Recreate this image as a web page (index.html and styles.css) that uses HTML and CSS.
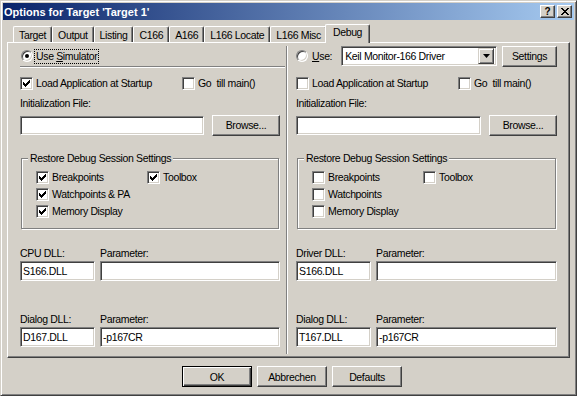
FILE: index.html
```html
<!DOCTYPE html>
<html>

<head>
	<meta charset="utf-8">
	<link rel="stylesheet" href="styles.css">
</head>

<body>

	<div class="window">
		<div class="titlebar">
			<span class="title">Options for Target 'Target 1'</span>
			<div class="caption-btns">
				<span class="cap-btn cap-help">?</span>
				<span class="cap-btn">
					<svg width="8" height="7" viewBox="0 0 8 7"><path d="M0 0h2v1H0zM6 0h2v1H6zM1 1h2v1H1zM5 1h2v1H5zM2 2h4v1H2zM3 3h2v1H3zM2 4h4v1H2zM1 5h2v1H1zM5 5h2v1H5zM0 6h2v1H0zM6 6h2v1H6z"/></svg>
				</span>
			</div>
		</div>

		<div class="client">
			<div class="tabs">
				<span class="tab">Target</span>
				<span class="tab">Output</span>
				<span class="tab">Listing</span>
				<span class="tab">C166</span>
				<span class="tab">A166</span>
				<span class="tab">L166 Locate</span>
				<span class="tab">L166 Misc</span>
				<span class="tab tab-active">Debug</span>
			</div>

			<div class="panel">
				<!-- Simulator side -->
				<div class="col col-left">
					<div class="top-row">
						<span class="radio radio-on"></span>
						<span class="focus">Use <u>S</u>imulator</span>
					</div>
					<div class="sep"></div>

					<div class="check-row">
						<label class="check"><span class="box"><svg width="7" height="7" viewBox="0 0 7 7"><path d="M0 2h1v3H0zM1 3h1v3H1zM2 4h1v3H2zM3 3h1v3H3zM4 2h1v3H4zM5 1h1v3H5zM6 0h1v3H6z"/></svg></span>Load Application at Startup</label>
						<label class="check"><span class="box"></span>Go&nbsp; till main()</label>
					</div>

					<div class="init-label">Initialization File:</div>
					<div class="file-row">
						<input type="text" class="field">
						<button class="btn browse">Browse...</button>
					</div>

					<div class="group">
						<div class="group-title">Restore Debug Session Settings</div>
						<div class="group-grid">
							<label class="check"><span class="box"><svg width="7" height="7" viewBox="0 0 7 7"><path d="M0 2h1v3H0zM1 3h1v3H1zM2 4h1v3H2zM3 3h1v3H3zM4 2h1v3H4zM5 1h1v3H5zM6 0h1v3H6z"/></svg></span>Breakpoints</label>
							<label class="check"><span class="box"><svg width="7" height="7" viewBox="0 0 7 7"><path d="M0 2h1v3H0zM1 3h1v3H1zM2 4h1v3H2zM3 3h1v3H3zM4 2h1v3H4zM5 1h1v3H5zM6 0h1v3H6z"/></svg></span>Toolbox</label>
							<label class="check"><span class="box"><svg width="7" height="7" viewBox="0 0 7 7"><path d="M0 2h1v3H0zM1 3h1v3H1zM2 4h1v3H2zM3 3h1v3H3zM4 2h1v3H4zM5 1h1v3H5zM6 0h1v3H6z"/></svg></span>Watchpoints &amp; PA</label>
							<span></span>
							<label class="check"><span class="box"><svg width="7" height="7" viewBox="0 0 7 7"><path d="M0 2h1v3H0zM1 3h1v3H1zM2 4h1v3H2zM3 3h1v3H3zM4 2h1v3H4zM5 1h1v3H5zM6 0h1v3H6z"/></svg></span>Memory Display</label>
						</div>
					</div>

					<div class="dll-grid">
						<span>CPU DLL:</span>
						<span>Parameter:</span>
						<input type="text" class="field" value="S166.DLL">
						<input type="text" class="field" value="">
					</div>

					<div class="dll-grid dll-dialog">
						<span>Dialog DLL:</span>
						<span>Parameter:</span>
						<input type="text" class="field" value="D167.DLL">
						<input type="text" class="field" value="-p167CR">
					</div>
				</div>

				<div class="divider"></div>

				<!-- Target driver side -->
				<div class="col col-right">
					<div class="top-row">
						<span class="radio"></span>
						<span class="use-label"><u>U</u>se:</span>
						<div class="combo">
							<span class="combo-text">Keil Monitor-166 Driver</span>
							<span class="combo-btn">
								<svg width="7" height="4" viewBox="0 0 7 4"><path d="M0 0h7L3.5 4z"/></svg>
							</span>
						</div>
						<button class="btn settings">Settings</button>
					</div>
					<div class="sep sep-blank"></div>

					<div class="check-row">
						<label class="check"><span class="box"></span>Load Application at Startup</label>
						<label class="check"><span class="box"></span>Go&nbsp; till main()</label>
					</div>

					<div class="init-label">Initialization File:</div>
					<div class="file-row">
						<input type="text" class="field">
						<button class="btn browse">Browse...</button>
					</div>

					<div class="group">
						<div class="group-title">Restore Debug Session Settings</div>
						<div class="group-grid">
							<label class="check"><span class="box"></span>Breakpoints</label>
							<label class="check"><span class="box"></span>Toolbox</label>
							<label class="check"><span class="box"></span>Watchpoints</label>
							<span></span>
							<label class="check"><span class="box"></span>Memory Display</label>
						</div>
					</div>

					<div class="dll-grid">
						<span>Driver DLL:</span>
						<span>Parameter:</span>
						<input type="text" class="field" value="S166.DLL">
						<input type="text" class="field" value="">
					</div>

					<div class="dll-grid dll-dialog">
						<span>Dialog DLL:</span>
						<span>Parameter:</span>
						<input type="text" class="field" value="T167.DLL">
						<input type="text" class="field" value="-p167CR">
					</div>
				</div>
			</div>

			<div class="footer">
				<button class="btn btn-default">OK</button>
				<button class="btn">Abbrechen</button>
				<button class="btn">Defaults</button>
			</div>
		</div>
	</div>

</body>

</html>
```

FILE: styles.css
```css
* {
	box-sizing: border-box;
}

body {
	margin: 0;
	background-color: #d4d0c8;
	font-family: "Liberation Sans", Arial, sans-serif;
	font-size: 10.5px;
	letter-spacing: -0.35px;
	color: #000;
}

.window {
	width: 577px;
	height: 396px;
	display: flex;
	flex-direction: column;
	padding: 2px;
	border: 1px solid;
	border-color: #d4d0c8 #404040 #404040 #d4d0c8;
	box-shadow: inset 1px 1px 0 #fff, inset -1px -1px 0 #808080;
}

/* title bar */

.titlebar {
	height: 17px;
	display: flex;
	align-items: center;
	justify-content: space-between;
	padding: 0 2px 0 1px;
	background: linear-gradient(to right, #0a246a, #a6caf0);
}

.title {
	color: #fff;
	font-weight: bold;
	font-size: 11px;
	letter-spacing: 0;
}

.caption-btns {
	display: flex;
	gap: 2px;
}

.cap-btn {
	width: 15px;
	height: 13px;
	display: flex;
	align-items: center;
	justify-content: center;
	background: #d4d0c8;
	border: 1px solid;
	border-color: #fff #404040 #404040 #fff;
	box-shadow: inset -1px -1px 0 #808080;
}

.cap-help {
	font-weight: bold;
	font-size: 10px;
	letter-spacing: 0;
	line-height: 10px;
}

/* tabs */

.client {
	flex: 1;
	display: flex;
	flex-direction: column;
	padding: 0 4px;
}

.tabs {
	height: 18px;
	margin-top: 4px;
	padding-left: 6px;
	display: flex;
	align-items: flex-end;
}

.tab {
	height: 16px;
	padding: 2px 5px 0;
	line-height: 13px;
	white-space: nowrap;
	background: #d4d0c8;
	border: 1px solid;
	border-bottom: 0;
	border-color: #fff #404040 #404040 #fff;
	border-radius: 2px 2px 0 0;
	box-shadow: inset -1px 0 0 #808080;
}

.tab-active {
	position: relative;
	z-index: 1;
	height: 19px;
	margin: 0 -2px -1px;
	padding: 1px 7px 0;
}

.panel {
	height: 316px;
	display: grid;
	grid-template-columns: 278px 2px 1fr;
	border: 1px solid;
	border-color: #fff #404040 #404040 #fff;
	box-shadow: inset -1px -1px 0 #808080;
}

.divider {
	margin: 3px 0;
	border-left: 1px solid #808080;
	border-right: 1px solid #fff;
}

/* columns */

.col {
	display: flex;
	flex-direction: column;
	padding-top: 3px;
	line-height: 13px;
}

.col-left {
	padding-left: 12px;
	padding-right: 6px;
}

.col-right {
	padding-left: 8px;
	padding-right: 12px;
}

.top-row {
	height: 20px;
	flex-shrink: 0;
	display: flex;
	align-items: center;
}

.col-left .radio {
	margin-left: 1px;
}

.focus {
	margin-left: 1px;
	padding: 0 1px;
	border: 1px dotted #000;
}

.use-label {
	margin-left: 4px;
}

.sep {
	height: 2px;
	margin-right: -5px;
	border-top: 1px solid #808080;
	border-bottom: 1px solid #fff;
}

.sep-blank {
	border-color: transparent;
}

.check-row {
	display: grid;
	grid-template-columns: 162px auto;
	margin-top: 8px;
}

.check {
	height: 15px;
	display: flex;
	align-items: center;
	white-space: nowrap;
}

.init-label {
	margin-top: 6px;
}

.file-row {
	height: 21px;
	margin-top: 5px;
	display: flex;
	align-items: center;
}

.file-row .field {
	flex: 1;
	min-width: 0;
	height: 19px;
	margin-right: 8px;
}

/* group box */

.group {
	margin: 22px 1px 0;
	padding-bottom: 8px;
	border: 1px solid #808080;
	box-shadow: inset 1px 1px 0 #fff, 1px 1px 0 #fff;
}

.group-title {
	display: table;
	margin: -7px 0 0 6px;
	padding: 0 2px;
	background: #d4d0c8;
}

.group-grid {
	display: grid;
	grid-template-columns: 111px auto;
	grid-auto-rows: 17px;
	align-items: center;
	margin-top: 4px;
	padding-left: 14px;
}

.dll-grid {
	display: grid;
	grid-template-columns: 75px 1fr;
	grid-template-rows: 13px 20px;
	column-gap: 5px;
	row-gap: 1px;
	margin-top: 18px;
}

.dll-dialog {
	margin-top: 32px;
}

/* controls */

.radio {
	width: 12px;
	height: 12px;
	flex: none;
	display: flex;
	align-items: center;
	justify-content: center;
	background: #fff;
	border-radius: 50%;
	border: 1px solid;
	border-color: #808080 #fff #fff #808080;
	box-shadow: inset 1px 1px 0 #404040, inset -1px -1px 0 #d4d0c8;
}

.radio-on::after {
	content: "";
	width: 4px;
	height: 4px;
	border-radius: 50%;
	background: #000;
}

.box {
	width: 13px;
	height: 13px;
	flex: none;
	margin-right: 3px;
	display: flex;
	align-items: center;
	justify-content: center;
	background: #fff;
	border: 1px solid;
	border-color: #808080 #fff #fff #808080;
	box-shadow: inset 1px 1px 0 #404040, inset -1px -1px 0 #d4d0c8;
}

.box svg {
	display: block;
}

.field {
	-webkit-appearance: none;
	appearance: none;
	width: 100%;
	height: 20px;
	margin: 0;
	padding: 0 2px;
	font: inherit;
	letter-spacing: inherit;
	color: #000;
	background: #fff;
	outline: 0;
	border: 1px solid;
	border-color: #808080 #fff #fff #808080;
	box-shadow: inset 1px 1px 0 #404040, inset -1px -1px 0 #d4d0c8;
}

.combo {
	flex: 1;
	height: 20px;
	margin: 0 5px 0 9px;
	padding: 0 2px 0 3px;
	display: flex;
	align-items: center;
	background: #fff;
	border: 1px solid;
	border-color: #808080 #fff #fff #808080;
	box-shadow: inset 1px 1px 0 #404040, inset -1px -1px 0 #d4d0c8;
}

.combo-text {
	flex: 1;
	white-space: nowrap;
}

.combo-btn {
	width: 16px;
	height: 16px;
	display: flex;
	align-items: center;
	justify-content: center;
	background: #d4d0c8;
	border: 1px solid;
	border-color: #d4d0c8 #404040 #404040 #d4d0c8;
	box-shadow: inset 1px 1px 0 #fff, inset -1px -1px 0 #808080;
}

.btn {
	margin: 0;
	padding: 0;
	font: inherit;
	letter-spacing: inherit;
	color: #000;
	background: #d4d0c8;
	border: 1px solid;
	border-color: #fff #404040 #404040 #fff;
	box-shadow: inset -1px -1px 0 #808080;
}

.browse {
	width: 68px;
	height: 21px;
	flex: none;
}

.settings {
	width: 55px;
	height: 21px;
	flex: none;
}

/* dialog buttons */

.footer {
	display: flex;
	justify-content: center;
	gap: 5px;
	margin-top: 8px;
	padding-left: 7px;
}

.footer .btn {
	width: 70px;
	height: 21px;
}

.btn-default {
	border-color: #000;
	box-shadow: inset 1px 1px 0 #fff, inset -1px -1px 0 #404040, inset -2px -2px 0 #808080;
}
```
